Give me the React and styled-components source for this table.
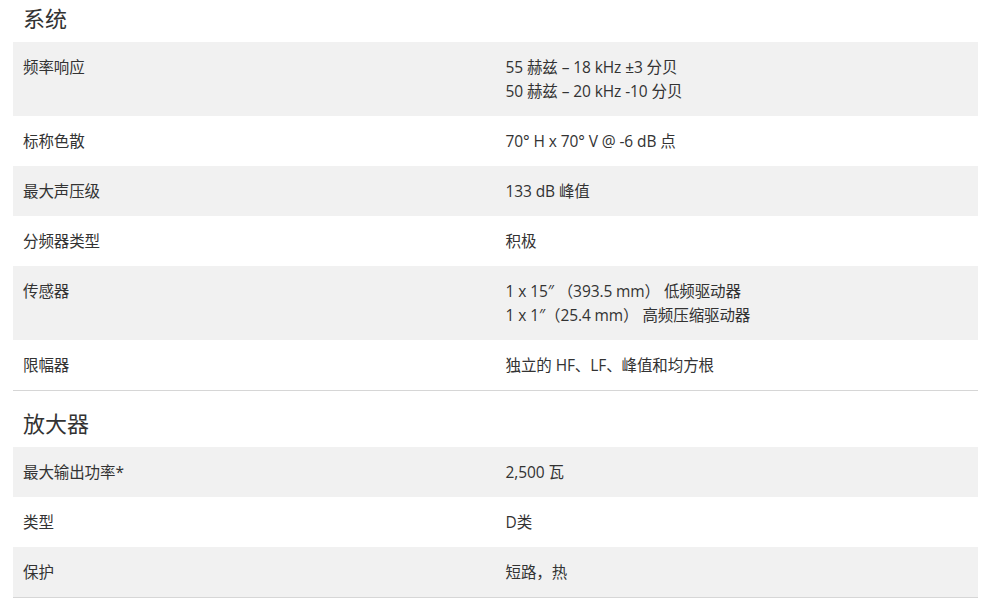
import React from 'react';
import styled, { createGlobalStyle } from 'styled-components';

const Global = createGlobalStyle`
body {
  margin: 0;
  background: #fff;
  color: #333;
  font-family: "Open Sans", "Noto Sans CJK SC", sans-serif;
}
`

const Page = styled.div`
padding: 3px 16px 0 13px;
`

const Section = styled.section`
border-bottom: 1px solid #d6d6d6;
& + & {
  margin-top: 17px;
}
`

const Heading = styled.h2`
margin: 0 0 9px;
padding-left: 10px;
font-size: 22px;
line-height: 30px;
font-weight: 400;
color: #333;
`

const Row = styled.div`
display: grid;
grid-template-columns: 1fr 1fr;
background: ${p => (p.$shade ? '#f1f1f1' : '#fff')};
font-size: 15.5px;
line-height: 24px;
letter-spacing: -0.1px;
`

const Cell = styled.div`
padding: 13px 10px;
`

const sections = [
  {
    title: '系统',
    rows: [
      ['频率响应', ['55 赫兹 – 18 kHz ±3 分贝', '50 赫兹 – 20 kHz -10 分贝']],
      ['标称色散', ['70° H x 70° V @ -6 dB 点']],
      ['最大声压级', ['133 dB 峰值']],
      ['分频器类型', ['积极']],
      ['传感器', ['1 x 15″ （393.5 mm） 低频驱动器', '1 x 1″（25.4 mm） 高频压缩驱动器']],
      ['限幅器', ['独立的 HF、LF、峰值和均方根']],
    ],
  },
  {
    title: '放大器',
    rows: [
      ['最大输出功率*', ['2,500 瓦']],
      ['类型', ['D类']],
      ['保护', ['短路，热']],
    ],
  },
];

export default function App() {
  return (
    <Page>
      <Global />
      {sections.map(s => (
        <Section key={s.title}>
          <Heading>{s.title}</Heading>
          {s.rows.map(([label, lines], i) => (
            <Row key={label} $shade={i % 2 === 0}>
              <Cell>{label}</Cell>
              <Cell>
                {lines.map(l => (
                  <div key={l}>{l}</div>
                ))}
              </Cell>
            </Row>
          ))}
        </Section>
      ))}
    </Page>
  );
}
